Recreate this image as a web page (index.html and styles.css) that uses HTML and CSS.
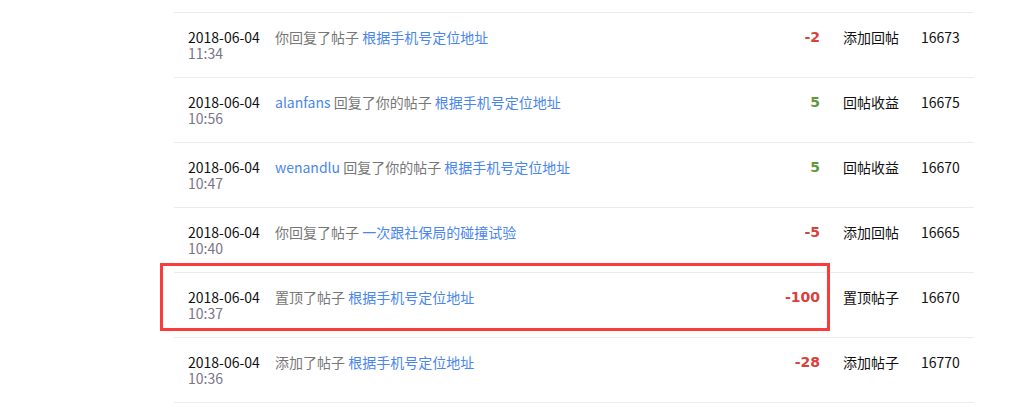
FILE: index.html
```html
<!DOCTYPE html>
<html lang="zh-CN">
<head>
  <meta charset="UTF-8">
  <title>积分记录</title>
  <link rel="stylesheet" href="styles.css">
</head>
<body>
  <div class="log-list">
    <div class="log-row">
      <div class="log-time">2018-06-04<span>11:34</span></div>
      <div class="log-desc">你回复了帖子 <a href="#">根据手机号定位地址</a></div>
      <div class="log-amount minus">-2</div>
      <div class="log-type">添加回帖</div>
      <div class="log-total">16673</div>
    </div>
    <div class="log-row">
      <div class="log-time">2018-06-04<span>10:56</span></div>
      <div class="log-desc"><a href="#">alanfans</a> 回复了你的帖子 <a href="#">根据手机号定位地址</a></div>
      <div class="log-amount plus">5</div>
      <div class="log-type">回帖收益</div>
      <div class="log-total">16675</div>
    </div>
    <div class="log-row">
      <div class="log-time">2018-06-04<span>10:47</span></div>
      <div class="log-desc"><a href="#">wenandlu</a> 回复了你的帖子 <a href="#">根据手机号定位地址</a></div>
      <div class="log-amount plus">5</div>
      <div class="log-type">回帖收益</div>
      <div class="log-total">16670</div>
    </div>
    <div class="log-row">
      <div class="log-time">2018-06-04<span>10:40</span></div>
      <div class="log-desc">你回复了帖子 <a href="#">一次跟社保局的碰撞试验</a></div>
      <div class="log-amount minus">-5</div>
      <div class="log-type">添加回帖</div>
      <div class="log-total">16665</div>
    </div>
    <div class="log-row marked">
      <div class="mark-box"></div>
      <div class="log-time">2018-06-04<span>10:37</span></div>
      <div class="log-desc">置顶了帖子 <a href="#">根据手机号定位地址</a></div>
      <div class="log-amount minus">-100</div>
      <div class="log-type">置顶帖子</div>
      <div class="log-total">16670</div>
    </div>
    <div class="log-row">
      <div class="log-time">2018-06-04<span>10:36</span></div>
      <div class="log-desc">添加了帖子 <a href="#">根据手机号定位地址</a></div>
      <div class="log-amount minus">-28</div>
      <div class="log-type">添加帖子</div>
      <div class="log-total">16770</div>
    </div>
  </div>
</body>
</html>
```

FILE: styles.css
```css
body {
  margin: 0;
  background: #fff;
  color: #222;
  font-family: "Noto Sans CJK SC", "Noto Sans", sans-serif;
  font-size: 14px;
}
.log-list {
  width: 800px;
  margin: 12px 0 0 174px;
  border-top: 1px solid #ebebeb;
}
.log-row {
  position: relative;
  display: grid;
  grid-template-columns: 87px 1fr 67px 78px 53px;
  height: 64px;
  padding-left: 14px;
  border-bottom: 1px solid #ebebeb;
  box-sizing: content-box;
}
.log-row > div {
  padding-top: 16px;
  line-height: 16px;
}
.log-time {
  color: #111;
}
.log-time span {
  display: block;
  color: #7b7488;
}
.log-desc {
  color: #777;
}
.log-desc a {
  color: #4a86f0;
  text-decoration: none;
}
.log-amount {
  padding-right: 23px;
  text-align: right;
  font-family: "DejaVu Sans", sans-serif;
  font-weight: bold;
  font-size: 14px;
}
.minus {
  color: #d8413b;
}
.plus {
  color: #5e9a3c;
}
.log-type {
  color: #111;
}
.log-total {
  color: #111;
}
/* red annotation box around the highlighted row */
.mark-box {
  position: absolute;
  left: -14px;
  top: -10px;
  width: 670px;
  height: 68px;
  box-sizing: border-box;
  border: 3px solid #fa3b3b;
  padding: 0 !important;
}
```
